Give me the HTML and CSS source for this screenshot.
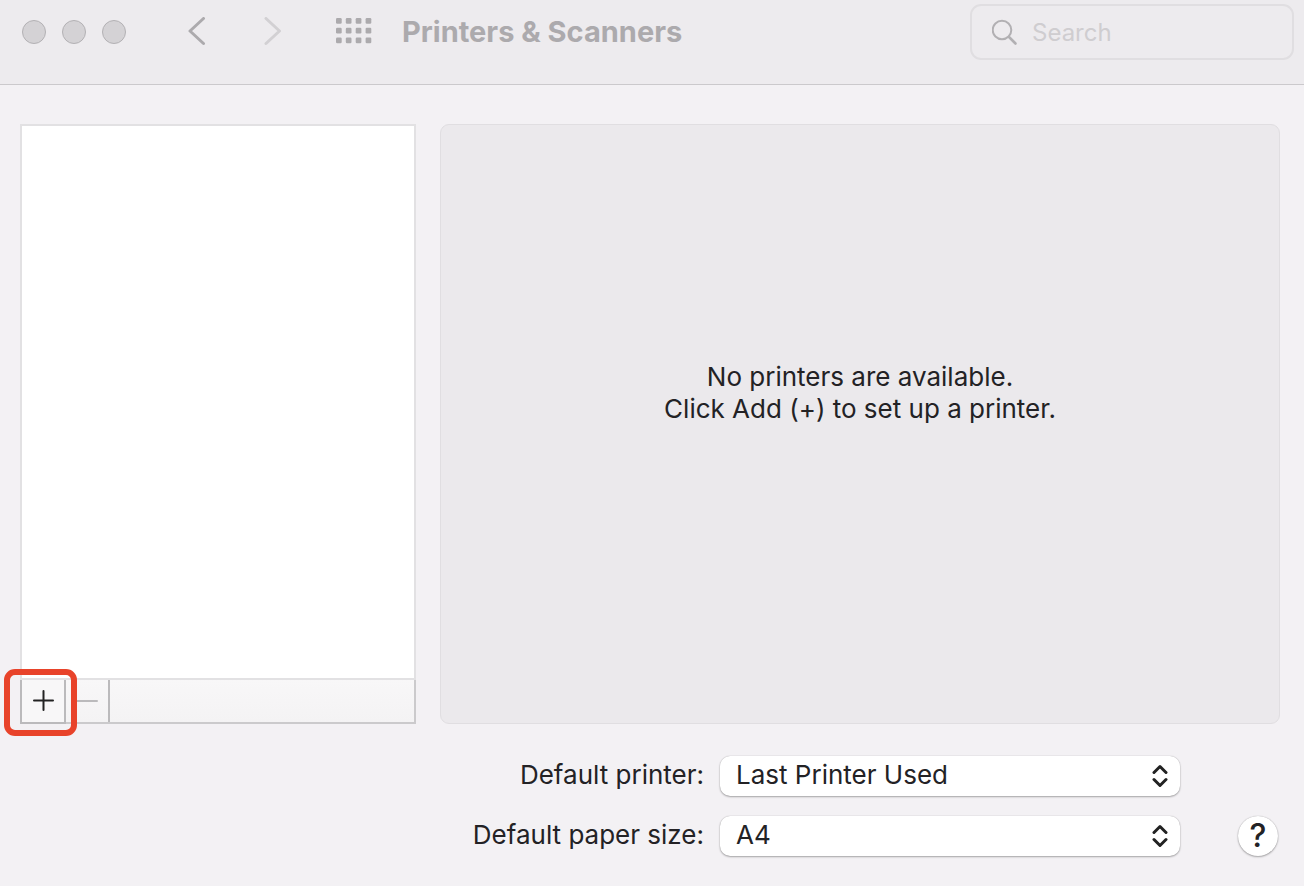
FILE: index.html
```html
<!DOCTYPE html>
<html lang="en">
<head>
    <meta charset="UTF-8">
    <meta name="viewport" content="width=device-width, initial-scale=1.0">
    <title>Printers &amp; Scanners</title>
    <link rel="stylesheet" href="styles.css">
</head>
<body>
    <!-- Title bar -->
    <header class="titlebar">
        <div class="window-controls">
            <button type="button" class="window-dot" aria-label="Close"></button>
            <button type="button" class="window-dot" aria-label="Minimize"></button>
            <button type="button" class="window-dot" aria-label="Zoom"></button>
        </div>
        <nav class="history">
            <button type="button" class="nav-button" aria-label="Back">
                <svg width="20" height="30" viewBox="0 0 20 30"><path d="M16.500 1.500L3 14L16.500 26.500"/></svg>
            </button>
            <button type="button" class="nav-button forward" aria-label="Forward">
                <svg width="20" height="30" viewBox="0 0 20 30"><path d="M3 1.500L16.500 14L3 26.500"/></svg>
            </button>
        </nav>
        <button type="button" class="grid-button" aria-label="Show all">
            <svg width="36" height="28" viewBox="0 0 36 28">
                <g id="dots">
                    <rect x="0" y="0" width="5.700" height="5.700" rx="1.200"/>
                    <rect x="9.800" y="0" width="5.700" height="5.700" rx="1.200"/>
                    <rect x="19.700" y="0" width="5.700" height="5.700" rx="1.200"/>
                    <rect x="29.600" y="0" width="5.700" height="5.700" rx="1.200"/>
                </g>
                <use href="#dots" y="9.800"/>
                <use href="#dots" y="19.600"/>
            </svg>
        </button>
        <h1 class="title">Printers &amp; Scanners</h1>
        <label class="search">
            <svg width="28" height="28" viewBox="0 0 28 28"><circle cx="10" cy="12" r="9.300"/><path d="M17 19L23.500 25.500" stroke-width="2.600"/></svg>
            <input type="search" class="search-input" placeholder="Search" aria-label="Search">
        </label>
    </header>

    <!-- Printer list and details -->
    <main class="panes">
        <section class="printers">
            <div class="printer-list"></div>
            <div class="list-toolbar">
                <div class="add-wrap">
                    <button type="button" class="tool-button add" aria-label="Add">
                        <svg width="22" height="22" viewBox="0 0 22 22"><path d="M11.500 1V20M2 10.500H21"/></svg>
                    </button>
                    <span class="highlight"></span>
                </div>
                <button type="button" class="tool-button remove" aria-label="Remove">
                    <svg width="22" height="22" viewBox="0 0 22 22"><path d="M0 11H21"/></svg>
                </button>
            </div>
        </section>
        <section class="details">
            <p class="message">No printers are available.<br>Click Add (+) to set up a printer.</p>
        </section>
    </main>

    <!-- Defaults -->
    <footer class="defaults">
        <form class="defaults-form">
            <label for="default-printer">Default printer:</label>
            <div class="select-box">
                <select id="default-printer">
                    <option>Last Printer Used</option>
                </select>
                <svg class="chevrons" width="16" height="24" viewBox="0 0 16 24"><path d="M2 8.500L8 2.500L14 8.500M2 15.500L8 21.500L14 15.500"/></svg>
            </div>
            <label for="paper-size">Default paper size:</label>
            <div class="select-box">
                <select id="paper-size">
                    <option>A4</option>
                </select>
                <svg class="chevrons" width="16" height="24" viewBox="0 0 16 24"><path d="M2 8.500L8 2.500L14 8.500M2 15.500L8 21.500L14 15.500"/></svg>
            </div>
        </form>
        <button type="button" class="help">?</button>
    </footer>
</body>
</html>
```
FILE: styles.css
```css
* {
    margin: 0;
    padding: 0;
    box-sizing: border-box;
}

body {
    background-color: #f3f1f4;
    color: #232225;
    display: flex;
    flex-direction: column;
    min-height: 100vh;
    font-family: Inter, "Liberation Sans", sans-serif;
    font-size: 26px;
    line-height: 32px;
}

button,
input,
select {
    font: inherit;
    color: inherit;
    border: none;
    background: none;
    appearance: none;
    outline: none;
}

svg {
    display: block;
    fill: none;
    stroke-linecap: round;
    stroke-linejoin: round;
}

/* Title bar */
.titlebar {
    display: flex;
    align-items: center;
    background-color: #edebee;
    border-bottom: 1px solid #cbc9cc;
    padding: 4px 10px 24px 22px;
}

.window-controls {
    display: flex;
    gap: 16px;
}

.window-dot {
    width: 24px;
    height: 24px;
    border: 1px solid #b3b1b4;
    border-radius: 50%;
    background-color: #d4d2d5;
}

.history {
    display: flex;
    gap: 56px;
    margin-left: 61px;
}

.nav-button svg {
    stroke: #acaaad;
    stroke-width: 3;
}

.nav-button.forward svg {
    stroke: #d2d0d3;
}

.grid-button {
    margin-left: 53px;
}

.grid-button svg {
    fill: #acaaad;
}

.title {
    margin-left: 30px;
    color: #acaaad;
    font-size: 29px;
    font-weight: 700;
}

.search {
    display: flex;
    align-items: center;
    gap: 12px;
    width: 324px;
    height: 56px;
    margin-left: auto;
    padding: 0 20px;
    border: 2px solid #e0dee1;
    border-radius: 11px;
}

.search svg {
    flex-shrink: 0;
    stroke: #b2b0b3;
    stroke-width: 2;
}

.search-input {
    width: 100%;
    padding-top: 2px;
    font-size: 24px;
}

.search-input::placeholder {
    color: #cfcdd0;
    opacity: 1;
}

/* Printer list and details */
.panes {
    display: flex;
    flex: 1;
    gap: 24px;
    padding: 39px 24px 0 20px;
}

.printers {
    display: flex;
    flex-direction: column;
    flex: 0 0 396px;
}

.printer-list {
    flex: 1;
    background-color: #fff;
    border: 2px solid #e2e1e3;
}

.list-toolbar {
    display: flex;
    height: 44px;
    background: linear-gradient(#f8f7f8, #f4f3f4);
    border: 2px solid #cbcacc;
    border-top: none;
    border-left: none;
}

.add-wrap {
    position: relative;
    height: 44px;
}

.tool-button {
    display: flex;
    align-items: center;
    justify-content: center;
    width: 44px;
    height: 42px;
    border-right: 2px solid #bbbabc;
}

.tool-button svg {
    stroke: #222;
    stroke-width: 2;
}

.tool-button.add {
    width: 46px;
    height: 44px;
    background-color: #f8f7f8;
    border: 2px solid #bbbabc;
    border-top: none;
}

.tool-button.remove svg {
    stroke: #bbbabc;
}

/* Red frame around the add button */
.highlight {
    position: absolute;
    inset: -11px -11px -12px -16px;
    border: 6px solid #e8432a;
    border-radius: 11px;
    pointer-events: none;
}

.details {
    display: flex;
    align-items: center;
    justify-content: center;
    flex: 1;
    padding-bottom: 62px;
    background-color: #ebe9ec;
    border: 1px solid #e0dee1;
    border-radius: 9px;
}

.message {
    text-align: center;
}

/* Defaults */
.defaults {
    display: flex;
    align-items: flex-end;
    justify-content: flex-end;
    gap: 58px;
    padding: 32px 26px 30px;
}

.defaults-form {
    display: grid;
    grid-template-columns: auto 460px;
    align-items: center;
    gap: 20px 16px;
    text-align: right;
}

.defaults-form label {
    padding-bottom: 2px;
}

.select-box {
    position: relative;
}

.select-box select {
    display: block;
    width: 100%;
    height: 40px;
    padding: 0 48px 2px 16px;
    background-color: #fff;
    border-radius: 10px;
    box-shadow: 0 0 1px rgba(0, 0, 0, 0.3), 0 1px 2px rgba(0, 0, 0, 0.3);
}

.chevrons {
    position: absolute;
    top: 8px;
    right: 12px;
    stroke: #222;
    stroke-width: 3;
    pointer-events: none;
}

.help {
    width: 40px;
    height: 40px;
    border-radius: 50%;
    background-color: #fff;
    font-size: 32px;
    font-weight: 500;
    box-shadow: 0 0 1px rgba(0, 0, 0, 0.3), 0 1px 2px rgba(0, 0, 0, 0.3);
}
```
